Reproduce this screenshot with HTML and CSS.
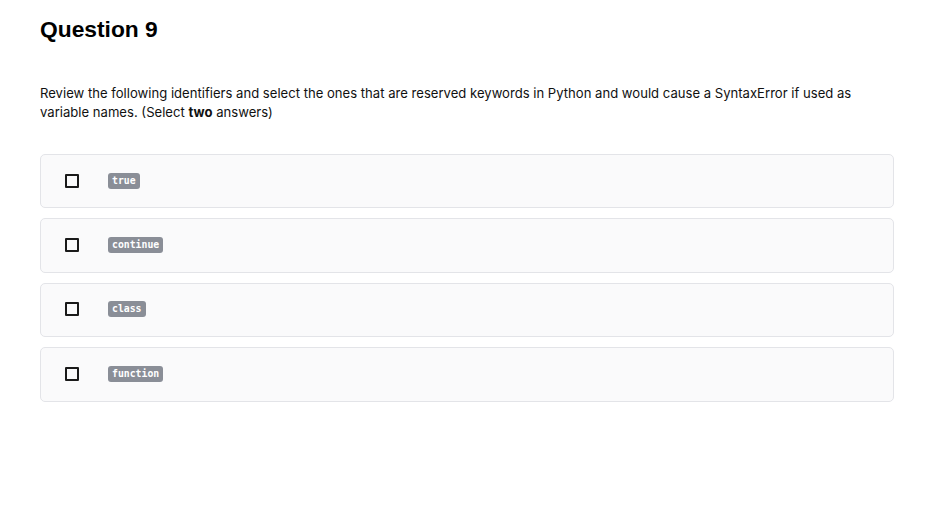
FILE: index.html
```html
<!DOCTYPE html>
<html>
<head>
<meta charset="utf-8">
<link rel="stylesheet" href="styles.css">
</head>
<body>
<main class="quiz">
  <h1 class="title">Question 9</h1>
  <p class="prompt">Review the following identifiers and select the ones that are reserved keywords in Python and would cause a SyntaxError if used as variable names. (Select <strong>two</strong> answers)</p>
  <div class="options">
    <label class="option"><span class="box"></span><code class="code">true</code></label>
    <label class="option"><span class="box"></span><code class="code">continue</code></label>
    <label class="option"><span class="box"></span><code class="code">class</code></label>
    <label class="option"><span class="box"></span><code class="code">function</code></label>
  </div>
</main>
</body>
</html>
```

FILE: styles.css
```css
html, body {
  margin: 0;
  padding: 0;
  background: #ffffff;
}
body {
  font-family: Inter, "Liberation Sans", sans-serif;
  color: #111111;
}
.quiz {
  padding: 14px 58px 0 40px;
}
.title {
  margin: 0;
  font-family: "Liberation Sans", Arial, sans-serif;
  font-size: 22.8px;
  font-weight: 700;
  line-height: 30px;
  color: #000;
}
.prompt {
  margin: 40px 0 0 0;
  font-size: 13.1px;
  line-height: 19px;
  color: #111;
}
.prompt strong {
  font-weight: 700;
}
.options {
  margin-top: 32px;
  display: flex;
  flex-direction: column;
  gap: 10px;
}
.option {
  display: flex;
  align-items: center;
  height: 52.4px;
  padding-left: 24px;
  background: #fafafb;
  border: 1px solid #e3e4e8;
  border-radius: 5px;
}
.box {
  width: 10px;
  height: 10px;
  border: 2px solid #1a1a1a;
  border-radius: 1px;
  margin-right: 29px;
  margin-top: -1px;
}
.code {
  font-family: "DejaVu Sans Mono", monospace;
  font-size: 9.8px;
  font-weight: 700;
  color: #ffffff;
  background: #8a8e97;
  border-radius: 3px;
  padding: 1px 4px;
  line-height: 14px;
  margin-top: -1px;
}
```
